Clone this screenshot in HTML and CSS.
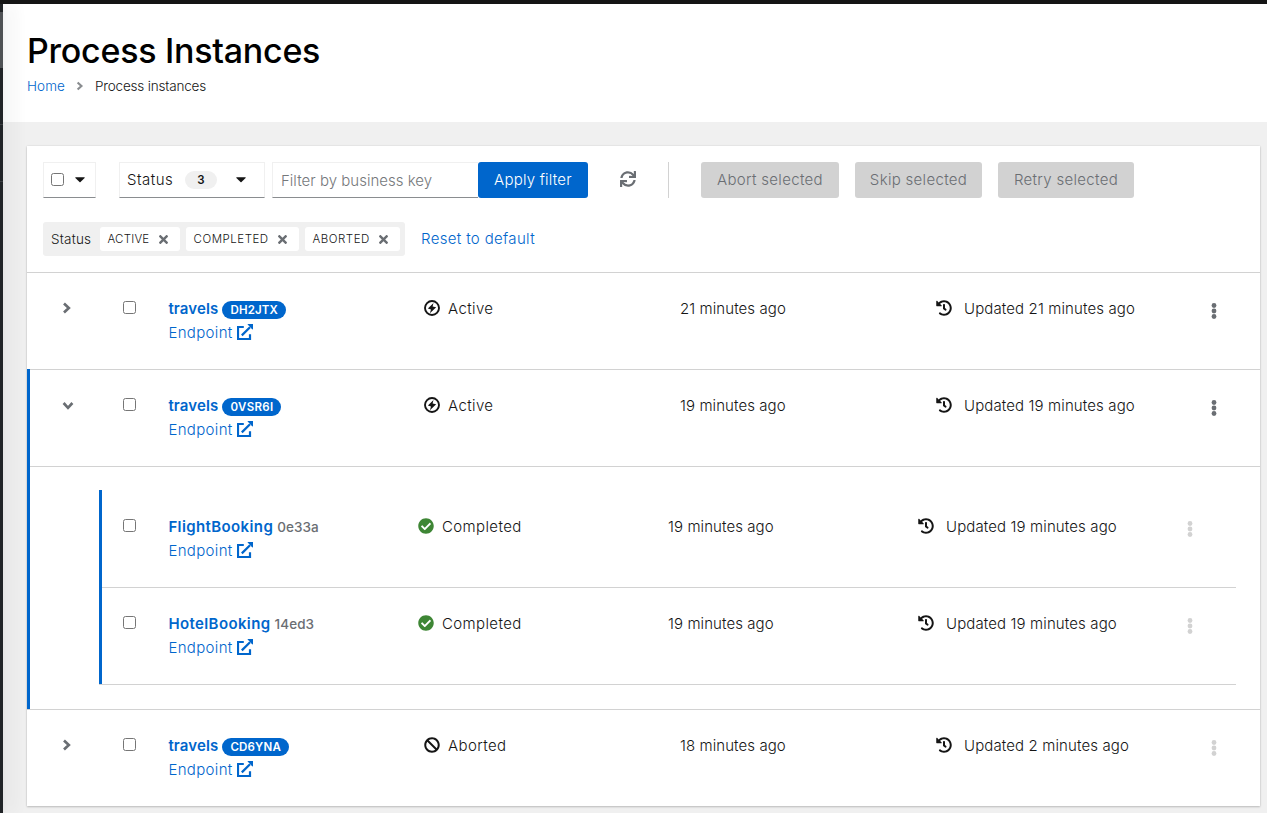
FILE: index.html
```html
<!DOCTYPE html>
<html lang="en">
<head>
<meta charset="utf-8">
<title>Process Instances</title>
<link rel="stylesheet" href="styles.css">
</head>
<body>
<svg class="defs" aria-hidden="true">
  <symbol id="i-sync" viewBox="0 0 512 512"><path d="M440.65 12.57l4 82.77A247.16 247.16 0 0 0 255.83 8C134.73 8 33.91 94.92 12.29 209.82A12 12 0 0 0 24.09 224h49.05a12 12 0 0 0 11.67-9.26 175.91 175.91 0 0 1 317-56.94l-101.46-4.86a12 12 0 0 0-12.57 12v47.41a12 12 0 0 0 12 12H500a12 12 0 0 0 12-12V12a12 12 0 0 0-12-12h-47.37a12 12 0 0 0-11.98 12.57zM255.83 432a175.61 175.61 0 0 1-146-77.8l101.8 4.87a12 12 0 0 0 12.57-12v-47.4a12 12 0 0 0-12-12H12a12 12 0 0 0-12 12V500a12 12 0 0 0 12 12h47.35a12 12 0 0 0 12-12.6l-4.15-82.57A247.17 247.17 0 0 0 255.83 504c121.11 0 221.93-86.92 243.55-201.82a12 12 0 0 0-11.8-14.18h-49.05a12 12 0 0 0-11.67 9.26A175.86 175.86 0 0 1 255.83 432z"/></symbol>
  <symbol id="i-history" viewBox="0 0 512 512"><path d="M504 255.531c.253 136.64-111.18 248.372-247.82 248.468-59.015.042-113.223-20.53-155.822-54.911-11.077-8.94-11.905-25.541-1.839-35.607l11.267-11.267c8.609-8.609 22.353-9.551 31.891-1.984C173.062 425.135 212.781 440 256 440c101.705 0 184-82.311 184-184 0-101.705-82.311-184-184-184-48.814 0-93.149 18.969-126.068 49.932l50.754 50.754c10.08 10.08 2.941 27.314-11.313 27.314H24c-8.837 0-16-7.163-16-16V38.627c0-14.254 17.234-21.393 27.314-11.314l49.372 49.372C129.209 34.136 189.552 8 256 8c136.81 0 247.747 110.78 248 247.531zm-180.912 78.784l9.823-12.63c8.138-10.463 6.253-25.542-4.21-33.679L288 256.349V152c0-13.255-10.745-24-24-24h-16c-13.255 0-24 10.745-24 24v135.651l65.409 50.874c10.463 8.137 25.541 6.253 33.679-4.21z"/></symbol>
  <symbol id="i-times" viewBox="0 0 352 512"><path d="M242.72 256l100.07-100.07c12.28-12.28 12.28-32.19 0-44.48l-22.24-22.24c-12.28-12.28-32.19-12.28-44.48 0L176 189.28 75.93 89.21c-12.28-12.28-32.19-12.28-44.48 0L9.21 111.45c-12.28 12.28-12.28 32.19 0 44.48L109.28 256 9.21 356.07c-12.28 12.28-12.28 32.19 0 44.48l22.24 22.24c12.28 12.28 32.2 12.28 44.48 0L176 322.72l100.07 100.07c12.28 12.28 32.2 12.28 44.48 0l22.24-22.24c12.28-12.28 12.28-32.19 0-44.48L242.72 256z"/></symbol>
  <symbol id="i-check" viewBox="0 0 512 512"><path d="M504 256c0 136.967-111.033 248-248 248S8 392.967 8 256 119.033 8 256 8s248 111.033 248 248zM227.314 387.314l184-184c6.248-6.248 6.248-16.379 0-22.627l-22.627-22.627c-6.248-6.249-16.379-6.249-22.628 0L216 308.118l-70.059-70.059c-6.248-6.248-16.379-6.248-22.628 0l-22.627 22.627c-6.248 6.248-6.248 16.379 0 22.627l104 104c6.249 6.249 16.379 6.249 22.628.001z"/></symbol>
  <symbol id="i-ban" viewBox="0 0 512 512"><path d="M256 8C119.034 8 8 119.033 8 256s111.034 248 248 248 248-111.034 248-248S392.967 8 256 8zm130.108 117.892c65.448 65.448 70 165.481 20.677 235.637L150.47 105.216c70.204-49.356 170.226-44.735 235.638 20.676zM125.892 386.108c-65.448-65.448-70-165.481-20.677-235.637L361.53 406.784c-70.203 49.356-170.226 44.736-235.638-20.676z"/></symbol>
  <symbol id="i-bolt" viewBox="0 0 16 16"><circle cx="8" cy="8" r="7" fill="none" stroke="currentColor" stroke-width="1.9"/><path d="M9.5 3 3.9 8.6l3.1.8-1.1 3.8L12.2 7.2l-3.6-.6z"/></symbol>
  <symbol id="i-external" viewBox="0 0 16 16"><path d="M6.8 3H1v12h12v-4.8M4.8 11.4 13 3.2" fill="none" stroke="currentColor" stroke-width="2.2"/><path d="M10.4 0H16v5.8l-1.8-1.6-2.4-2.4z"/></symbol>
  <symbol id="i-angle" viewBox="0 0 10 12"><path d="M2 1.6 6.8 6 2 10.4" fill="none" stroke="currentColor" stroke-width="2.7"/></symbol>
  <symbol id="i-kebab" viewBox="0 0 6 16"><circle cx="3" cy="2.5" r="2.4"/><circle cx="3" cy="8" r="2.4"/><circle cx="3" cy="13.5" r="2.4"/></symbol>
  <symbol id="i-caret" viewBox="0 0 10 6"><path d="M.6.3h8.8q.6.2.2.8L5.5 5q-.5.4-1 0L.4 1.1Q0 .5.6.3z"/></symbol>
</svg>

<div class="app">
  <div class="masthead"></div>
  <div class="body">
    <nav class="sidebar"><div class="sidebar-item current"></div><div class="sidebar-item"></div><div class="sidebar-item"></div></nav>
    <main class="main">
      <header class="page-header">
        <h1 class="title">Process Instances</h1>
        <div class="breadcrumb">
          <a class="crumb-home">Home</a>
          <svg class="crumb-sep"><use href="#i-angle"/></svg>
          <span class="crumb-current">Process instances</span>
        </div>
      </header>
      <section class="content">
        <div class="card">
          <div class="toolbar">
            <div class="toolbar-row">
              <div class="bulk-select"><span class="check"></span><svg class="caret"><use href="#i-caret"/></svg></div>
              <div class="status-select"><span class="select-text">Status</span><span class="count">3</span><svg class="caret"><use href="#i-caret"/></svg></div>
              <div class="key-filter"><div class="key-input">Filter by business key</div><button class="btn primary">Apply filter</button></div>
              <svg class="sync"><use href="#i-sync"/></svg>
              <div class="actions">
                <button class="btn disabled abort">Abort selected</button>
                <button class="btn disabled skip">Skip selected</button>
                <button class="btn disabled retry">Retry selected</button>
              </div>
            </div>
            <div class="chip-row">
              <div class="chip-group">
                <span class="chip-label">Status</span>
                <span class="chip chip-active"><span class="chip-text">ACTIVE</span><svg class="times"><use href="#i-times"/></svg></span>
                <span class="chip chip-completed"><span class="chip-text wide">COMPLETED</span><svg class="times"><use href="#i-times"/></svg></span>
                <span class="chip chip-aborted"><span class="chip-text wide">ABORTED</span><svg class="times"><use href="#i-times"/></svg></span>
              </div>
              <a class="reset">Reset to default</a>
            </div>
          </div>

          <div class="item">
            <div class="row">
              <svg class="toggle"><use href="#i-angle"/></svg>
              <span class="check"></span>
              <div class="name-cell"><div class="line"><b class="name">travels</b><span class="badge">DH2JTX</span></div><div class="line"><a class="endpoint">Endpoint</a><svg class="icon link"><use href="#i-external"/></svg></div></div>
              <div class="state"><svg class="icon"><use href="#i-bolt"/></svg><span>Active</span></div>
              <div class="created">21 minutes ago</div>
              <div class="updated"><svg class="icon"><use href="#i-history"/></svg><span>Updated 21 minutes ago</span></div>
              <svg class="kebab"><use href="#i-kebab"/></svg>
            </div>
          </div>

          <div class="item expanded">
            <div class="row">
              <svg class="toggle open"><use href="#i-angle"/></svg>
              <span class="check"></span>
              <div class="name-cell"><div class="line"><b class="name">travels</b><span class="badge vsr">0VSR6I</span></div><div class="line"><a class="endpoint">Endpoint</a><svg class="icon link"><use href="#i-external"/></svg></div></div>
              <div class="state"><svg class="icon"><use href="#i-bolt"/></svg><span>Active</span></div>
              <div class="created">19 minutes ago</div>
              <div class="updated"><svg class="icon"><use href="#i-history"/></svg><span>Updated 19 minutes ago</span></div>
              <svg class="kebab"><use href="#i-kebab"/></svg>
            </div>
            <div class="children">
              <div class="child-list">
                <div class="row child">
                  <span class="check"></span>
                  <div class="name-cell"><div class="line"><b class="name booking">FlightBooking</b><span class="short-id">0e33a</span></div><div class="line"><a class="endpoint">Endpoint</a><svg class="icon link"><use href="#i-external"/></svg></div></div>
                  <div class="state"><svg class="icon ok"><use href="#i-check"/></svg><span>Completed</span></div>
                  <div class="created">19 minutes ago</div>
                  <div class="updated"><svg class="icon"><use href="#i-history"/></svg><span>Updated 19 minutes ago</span></div>
                  <svg class="kebab off"><use href="#i-kebab"/></svg>
                </div>
                <div class="row child">
                  <span class="check"></span>
                  <div class="name-cell"><div class="line"><b class="name booking">HotelBooking</b><span class="short-id">14ed3</span></div><div class="line"><a class="endpoint">Endpoint</a><svg class="icon link"><use href="#i-external"/></svg></div></div>
                  <div class="state"><svg class="icon ok"><use href="#i-check"/></svg><span>Completed</span></div>
                  <div class="created">19 minutes ago</div>
                  <div class="updated"><svg class="icon"><use href="#i-history"/></svg><span>Updated 19 minutes ago</span></div>
                  <svg class="kebab off"><use href="#i-kebab"/></svg>
                </div>
              </div>
            </div>
          </div>

          <div class="item">
            <div class="row">
              <svg class="toggle"><use href="#i-angle"/></svg>
              <span class="check"></span>
              <div class="name-cell"><div class="line"><b class="name">travels</b><span class="badge">CD6YNA</span></div><div class="line"><a class="endpoint">Endpoint</a><svg class="icon link"><use href="#i-external"/></svg></div></div>
              <div class="state"><svg class="icon"><use href="#i-ban"/></svg><span>Aborted</span></div>
              <div class="created">18 minutes ago</div>
              <div class="updated"><svg class="icon"><use href="#i-history"/></svg><span>Updated 2 minutes ago</span></div>
              <svg class="kebab off"><use href="#i-kebab"/></svg>
            </div>
          </div>
        </div>
      </section>
    </main>
  </div>
</div>
</body>
</html>
```
FILE: styles.css
```css
* { box-sizing: border-box; }
body {
  margin: 0;
  font: 360 15px/24px Inter, "Liberation Sans", sans-serif;
  color: #151515;
  background: #f0f0f0;
}
svg { display: block; fill: currentColor; flex: none; }
.defs { display: none; }
.app { height: 813px; display: flex; flex-direction: column; overflow: hidden; }
.masthead { height: 4px; background: #151515; flex: none; }
.body { flex: 1; min-height: 0; display: flex; }

.sidebar {
  width: 3px;
  flex: none;
  z-index: 1;
  padding-top: 8px;
  background: #212427;
  box-shadow: 8px 0 16px rgba(3, 3, 3, .16), 0 0 6px rgba(3, 3, 3, .08);
  clip-path: inset(0 -40px 0 0);
}
.sidebar-item { height: 57px; border-bottom: 1px solid #3c3f42; }
.sidebar-item.current { height: 56px; background: #4f5255; border: 0; }

.main { flex: 1; min-width: 0; }
.page-header { height: 118px; padding: 24px; background: #fff; }
.title { margin: 0; font-size: 34px; line-height: 46px; font-weight: 450; letter-spacing: -.26px; color: #000; }
.breadcrumb { display: flex; align-items: center; font-size: 13.5px; line-height: 24px; }
.crumb-home { color: #06c; width: 38px; letter-spacing: .1px; }
.crumb-sep { width: 8px; height: 10px; margin: 0 11px 0 11px; color: #8a8d90; }
.crumb-current { letter-spacing: -.18px; }

.content { padding: 24px 7px 0 24px; }
.card { height: 660px; background: #fff; box-shadow: 0 1px 2px rgba(3, 3, 3, .2), 0 0 2px rgba(3, 3, 3, .1); }

.toolbar { height: 126px; padding: 16px; }
.toolbar-row { display: flex; height: 36px; }
.check { width: 13px; height: 13px; border: 1px solid #767676; border-radius: 2.5px; background: #fff; flex: none; }
.caret { width: 10px; height: 6px; }
.bulk-select, .status-select, .key-input { border: 1px solid #f0f0f0; border-bottom-color: #8a8d90; height: 36px; display: flex; align-items: center; }
.bulk-select { width: 53px; padding: 0 10px 1px 7px; justify-content: space-between; }
.status-select { width: 146px; margin-left: 23px; padding-left: 7px; }
.select-text { width: 58px; letter-spacing: .5px; }
.count { width: 32px; height: 18px; margin-right: 19px; border-radius: 9px; background: #f0f0f0; font-size: 11.5px; line-height: 18px; font-weight: 600; text-align: center; }
.key-filter { display: flex; margin-left: 7px; }
.key-input { width: 206px; border-right: 0; padding: 2px 0 0 8px; color: #75787b; letter-spacing: .02px; }
.btn { height: 36px; border: 0; border-radius: 3px; padding: 0 0 1px; font: inherit; text-align: center; }
.primary { width: 110px; background: #06c; color: #fff; letter-spacing: .22px; }
.sync { width: 16px; height: 16px; margin: 9px 0 0 32px; color: #6a6e73; }
.actions { display: flex; gap: 16px; margin-left: 32px; padding-left: 32px; border-left: 1px solid #d2d2d2; }
.disabled { background: #d2d2d2; color: #6a6e73; letter-spacing: .31px; }
.abort { width: 138px; }
.skip { width: 127px; }
.retry { width: 136px; }

.chip-row { display: flex; align-items: center; margin-top: 24px; height: 34px; }
.chip-group { display: flex; align-items: center; gap: 5px; width: 362px; height: 34px; padding-left: 8px; background: #f0f0f0; border-radius: 3px; }
.chip-label { width: 44px; font-size: 13.5px; letter-spacing: .2px; }
.chip { display: flex; align-items: center; justify-content: space-between; height: 24px; padding: 0 12.5px 0 7.5px; background: #fff; border-radius: 3px; font-size: 11.5px; }
.chip-active { width: 80px; margin-right: 1px; }
.chip-completed { width: 113px; margin-right: 1px; }
.chip-aborted { width: 95px; }
.chip-text { letter-spacing: .2px; }
.chip-text.wide { letter-spacing: .52px; }
.times { width: 9px; height: 13px; color: #6a6e73; }
.reset { margin-left: 16px; color: #06c; letter-spacing: .34px; }

.item { border-top: 1px solid #d2d2d2; position: relative; }
.row { display: grid; grid-template-columns: 61px 45px 256px 256px 256px 275px 1fr; height: 96px; padding: 24px 0 24px 35px; }
.expanded::before { content: ""; position: absolute; left: 0; top: -1px; bottom: 0; width: 3px; background: #06c; }
.row > .check { margin-top: 4px; }
.toggle { width: 10px; height: 12px; margin-top: 5px; color: #6a6e73; }
.toggle.open { transform: translate(1px, 1px) rotate(90deg); }
.name-cell { color: #06c; padding-left: .4px; }
.line { display: flex; align-items: center; height: 24px; }
.name { font-weight: 600; letter-spacing: .14px; }
.name.booking { letter-spacing: .39px; }
.badge { margin: 1px 0 0 4px; padding: 0 8px; height: 18px; border-radius: 9px; background: #06c; color: #fff; font-size: 11.5px; line-height: 18px; font-weight: 600; letter-spacing: .18px; }
.badge.vsr { letter-spacing: .29px; }
.endpoint { width: 64.6px; letter-spacing: .34px; }
.icon { width: 16px; height: 16px; }
.icon.link { margin: -2px 0 0 4px; }
.icon.ok { color: #3e8635; }
.short-id { margin-left: 4px; font-size: 13.5px; font-weight: 500; color: #6a6e73; letter-spacing: .08px; }
.state, .updated { display: flex; height: 24px; align-items: center; }
.state .icon, .updated .icon { margin-top: -2px; }
.state { gap: 8px; letter-spacing: .38px; }
.updated { gap: 12px; letter-spacing: .12px; }
.created { letter-spacing: .08px; }
.kebab { width: 6px; height: 16px; margin-top: 6px; color: #6a6e73; }
.kebab.off { color: #d2d2d2; }

.children { border-top: 1px solid #d2d2d2; padding: 23px 24px 24px 72px; }
.child-list { position: relative; border-bottom: 1px solid #d2d2d2; }
.child-list::before { content: ""; position: absolute; left: 0; top: 0; bottom: 0; width: 3px; background: #06c; }
.row.child { grid-template-columns: 45px 250px 250px 250px 269px 1fr; height: 97px; margin-left: 3px; padding: 25px 0 23px 21px; }
.row.child + .row.child { border-top: 1px solid #d2d2d2; padding-top: 24px; }
```
